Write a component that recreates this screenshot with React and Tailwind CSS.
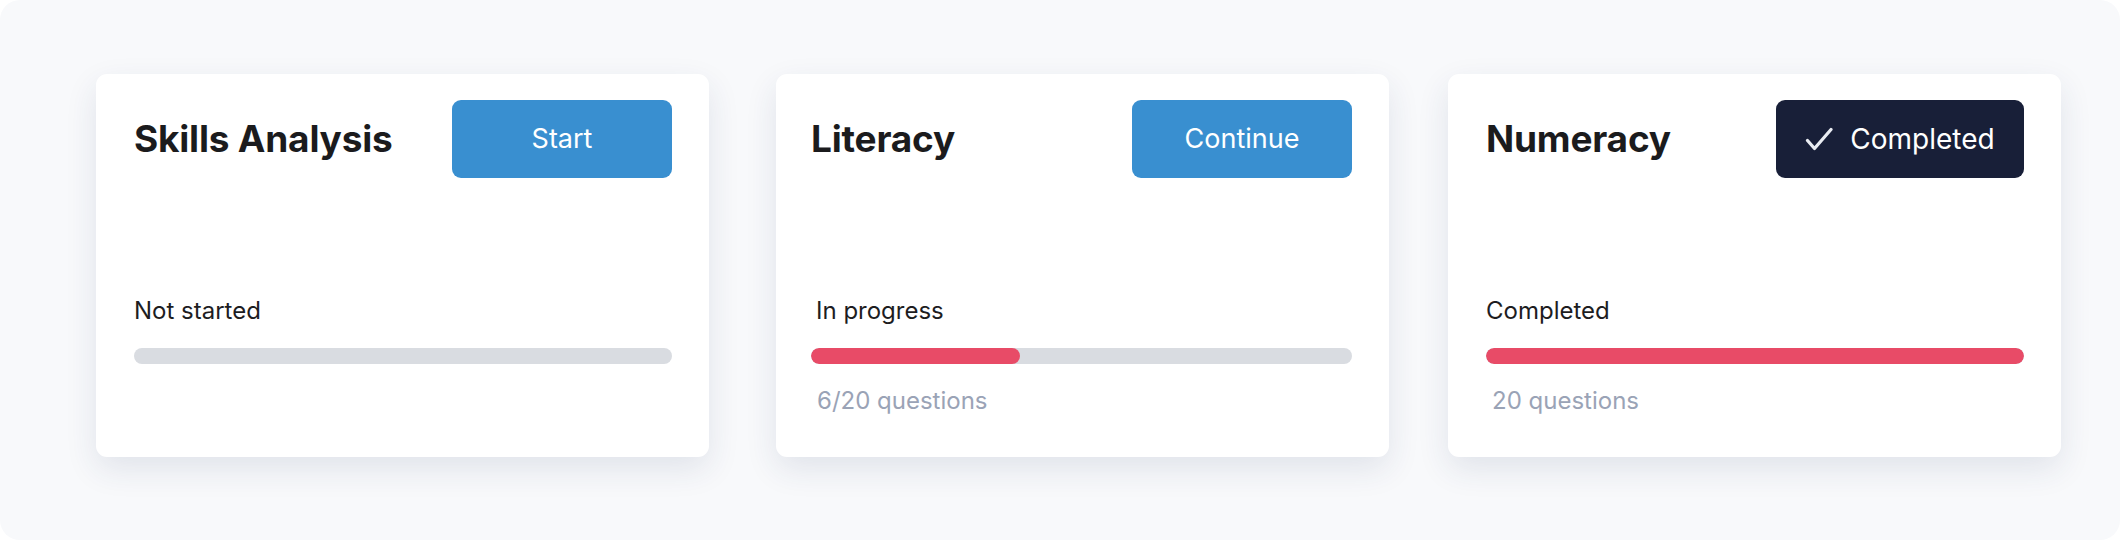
import { Fragment } from 'react';

const assessments = [
  {
    title: 'Skills Analysis',
    action: 'Start',
    status: 'Not started',
    progress: 0,
    note: null,
    done: false,
  },
  {
    title: 'Literacy',
    action: 'Continue',
    status: 'In progress',
    progress: 38.6,
    note: '6/20 questions',
    done: false,
  },
  {
    title: 'Numeracy',
    action: 'Completed',
    status: 'Completed',
    progress: 100,
    note: '20 questions',
    done: true,
  },
];

const CheckIcon = () => (
  <svg width="28" height="24" viewBox="0 0 28 24" fill="none" className="shrink-0">
    <path
      d="M2.5 13.5 9.5 21.5 26 2.5"
      stroke="#e9ecf2"
      strokeWidth="3.2"
      strokeLinecap="round"
      strokeLinejoin="round"
    />
  </svg>
);

const ActionButton = ({ label, done }) => {
  if (done) {
    return (
      <button className="flex h-[78px] w-[248px] items-center justify-center gap-[17px] rounded-[9px] bg-[#181f38] text-[28px] text-white">
        <CheckIcon />
        <span>{label}</span>
      </button>
    );
  }
  return (
    <button className="flex h-[78px] min-w-[220px] items-center justify-center rounded-[9px] bg-[#398fd0] px-[50px] text-[27px] text-white">
      {label}
    </button>
  );
};

const AssessmentCard = ({ item, narrow }) => (
  <div
    className={`flex w-[613px] flex-col rounded-[11px] bg-white pt-[26px] pb-[40px] pr-[37px] shadow-[0_12px_32px_rgba(40,52,100,0.11)] ${
      narrow ? 'pl-[35px]' : 'pl-[38px]'
    }`}
  >
    <div className="flex items-center justify-between">
      <h2 className="text-[37px] font-bold tracking-[-0.2px] text-[#1b1b1d]">{item.title}</h2>
      <ActionButton label={item.action} done={item.done} />
    </div>

    <p className={`mt-[117px] text-[24px] leading-[32px] text-[#1d1d1f] ${narrow ? 'pl-[5px]' : ''}`}>
      {item.status}
    </p>

    <div className="mt-[21px] h-[16px] w-full overflow-hidden rounded-full bg-[#d9dce1]">
      <div className="h-full rounded-full bg-[#e84b67]" style={{ width: `${item.progress}%` }} />
    </div>

    {item.note && (
      <p className="mt-[21px] pl-[6px] text-[24px] leading-[32px] text-[#9aa3b6]">{item.note}</p>
    )}
  </div>
);

export default function App() {
  return (
    <div className="bg-white" style={{ fontFamily: 'Inter, "Noto Sans", sans-serif' }}>
      <div className="h-[540px] w-[2120px] rounded-[20px] bg-[#f8f9fb] pt-[74px] pl-[96px]">
        <div className="flex h-[383px] items-stretch">
          {assessments.map((item, i) => (
            <Fragment key={item.title}>
              {i === 1 && <div className="w-[67px] shrink-0" />}
              {i === 2 && <div className="w-[59px] shrink-0" />}
              <AssessmentCard item={item} narrow={i === 1} />
            </Fragment>
          ))}
        </div>
      </div>
    </div>
  );
}
